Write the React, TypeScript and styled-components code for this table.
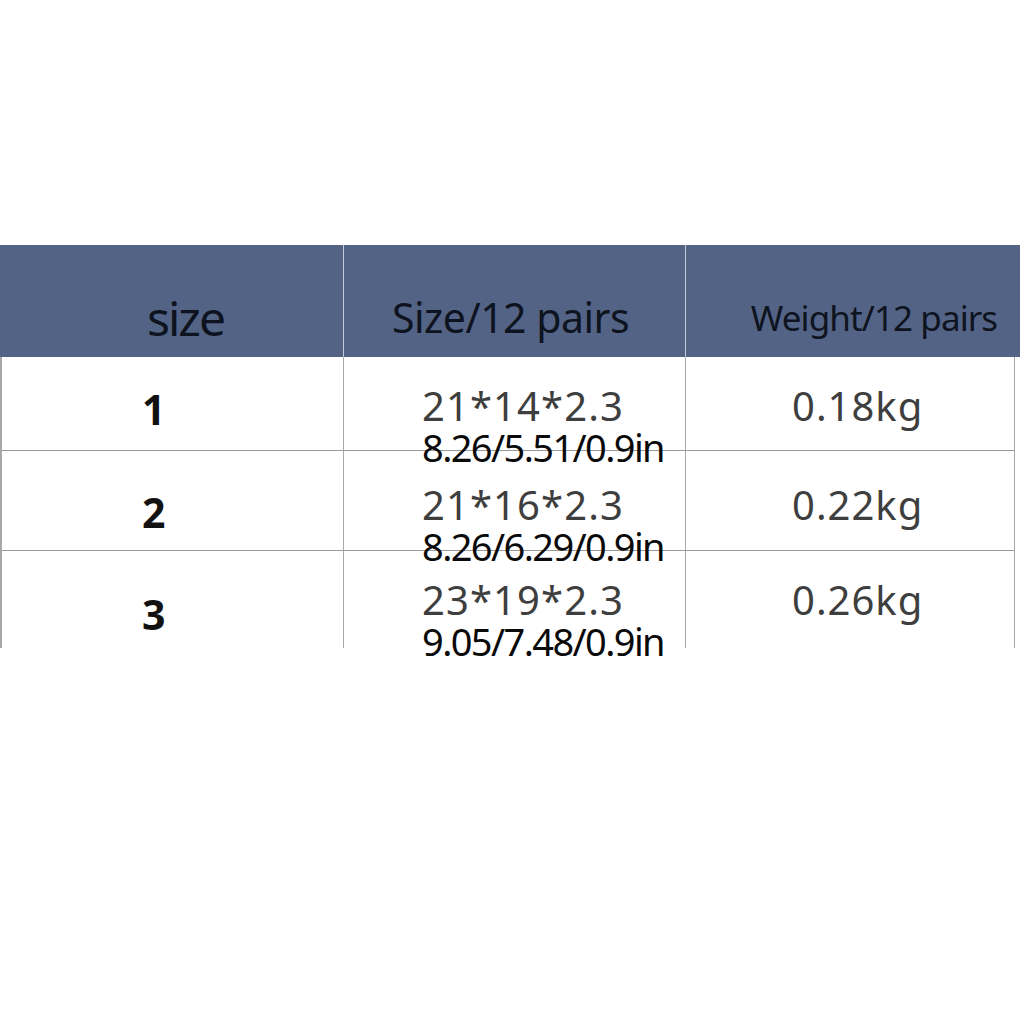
import React from "react";
import styled, { createGlobalStyle } from "styled-components";

const Global = createGlobalStyle`
  html, body { margin: 0; padding: 0; background: #ffffff; }
  body { font-family: "Noto Sans", "Open Sans", sans-serif; }
`;

const Page = styled.div`
  width: 1020px;
  height: 1020px;
  padding-top: 245px;
  box-sizing: border-box;
  background: #ffffff;
  overflow: hidden;
`;

const Header = styled.div`
  display: grid;
  grid-template-columns: 343px 342px 335px;
  height: 112px;
  background: #536385;
`;

const HeadCell = styled.div<{ $shift: number; $size: number; $pad: number; $ls: number; $first?: boolean }>`
  display: flex;
  align-items: flex-end;
  justify-content: center;
  padding-left: ${(p) => Math.max(p.$shift, 0)}px;
  padding-right: ${(p) => Math.max(-p.$shift, 0)}px;
  padding-bottom: ${(p) => p.$pad}px;
  border-left: ${(p) => (p.$first ? "none" : "1px solid #c3cbdb")};
  font-size: ${(p) => p.$size}px;
  line-height: 1;
  color: #0e1320;
  letter-spacing: ${(p) => p.$ls}px;
  white-space: nowrap;
`;

const Body = styled.div`
  width: 1012px;
  border-left: 2px solid #a8a8a8;
  border-right: 1px solid #a8a8a8;
`;

const Row = styled.div<{ $h: number; $top?: boolean }>`
  display: grid;
  grid-template-columns: 341px 342px 329px;
  grid-template-rows: minmax(0, 1fr);
  height: ${(p) => p.$h}px;
  box-sizing: border-box;
  border-top: ${(p) => (p.$top ? "1.5px solid #9a9a9a" : "none")};
`;

const IndexCell = styled.div<{ $pt: number }>`
  padding-top: ${(p) => p.$pt}px;
  padding-left: 140px;
  font-family: "Open Sans", "Noto Sans", sans-serif;
  font-weight: 700;
  font-size: 41px;
  line-height: 1;
  color: #111111;
  min-height: 0;
`;

const SizeCell = styled.div<{ $pt: number }>`
  border-left: 1px solid #a8a8a8;
  padding-top: ${(p) => p.$pt}px;
  padding-left: 78px;
  display: flex;
  flex-direction: column;
  min-height: 0;
  overflow: visible;
`;

const Metric = styled.div`
  font-size: 40px;
  line-height: 1;
  color: #3e3e3e;
  letter-spacing: 1.1px;
  white-space: nowrap;
`;

const Inches = styled.div`
  margin-top: 2px;
  font-size: 38px;
  line-height: 1;
  color: #0a0a0a;
  letter-spacing: -1.6px;
  white-space: nowrap;
`;

const WeightCell = styled.div<{ $pt: number }>`
  border-left: 1px solid #a8a8a8;
  padding-top: ${(p) => p.$pt}px;
  padding-left: 106px;
  font-size: 40px;
  line-height: 1;
  color: #3e3e3e;
  letter-spacing: 1px;
  min-height: 0;
`;

const rows = [
  { idx: "1", metric: "21*14*2.3", inch: "8.26/5.51/0.9in", weight: "0.18kg", h: 93, pt: 29, ipt: 32 },
  { idx: "2", metric: "21*16*2.3", inch: "8.26/6.29/0.9in", weight: "0.22kg", h: 100, pt: 34, ipt: 41 },
  { idx: "3", metric: "23*19*2.3", inch: "9.05/7.48/0.9in", weight: "0.26kg", h: 98, pt: 29, ipt: 43 },
];

export default function App() {
  return (
    <Page>
      <Global />
      <Header>
        <HeadCell $first $shift={28} $size={48} $pad={15} $ls={-2}>size</HeadCell>
        <HeadCell $shift={-8} $size={41} $pad={19} $ls={-0.5}>Size/12 pairs</HeadCell>
        <HeadCell $shift={42} $size={35} $pad={22} $ls={-0.9}>Weight/12 pairs</HeadCell>
      </Header>
      <Body>
        {rows.map((r, i) => (
          <Row key={r.idx} $h={r.h} $top={i > 0}>
            <IndexCell $pt={r.ipt}>{r.idx}</IndexCell>
            <SizeCell $pt={r.pt}>
              <Metric>{r.metric}</Metric>
              <Inches>{r.inch}</Inches>
            </SizeCell>
            <WeightCell $pt={r.pt}>{r.weight}</WeightCell>
          </Row>
        ))}
      </Body>
    </Page>
  );
}
